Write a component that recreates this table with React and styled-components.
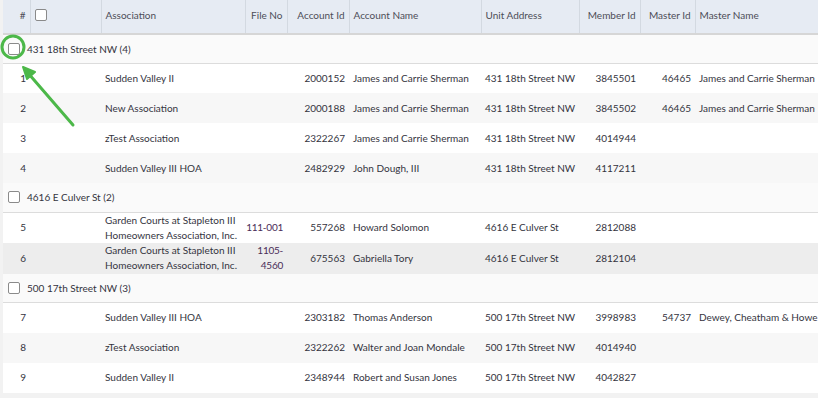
import React from "react";
import styled, { createGlobalStyle } from "styled-components";

const GlobalStyle = createGlobalStyle`
  html, body {
    margin: 0;
    padding: 0;
    background: #f2f2f2;
    overflow: hidden;
  }
  body {
    font-family: "Lato", "Open Sans", sans-serif;
    font-size: 10px;
    color: #34343e;
  }
`;

const Page = styled.div`
  position: relative;
  width: 818px;
  height: 398px;
  padding-left: 3px;
  box-sizing: border-box;
  overflow: hidden;
`;

const Grid = styled.table`
  border-collapse: collapse;
  table-layout: fixed;
  width: 900px;
`;

const HeadCell = styled.th`
  height: 34px;
  padding: 0 4px 4px;
  background: #e6ebf3;
  border-right: 1px solid #d3d9e1;
  border-bottom: 2px solid #d6d6d6;
  font-weight: normal;
  color: #4d4d57;
  text-align: ${({ $right }) => ($right ? "right" : "left")};
  white-space: nowrap;
  box-sizing: border-box;
`;

const GroupRow = styled.tr`
  background: #fafafa;
  td {
    height: 29px;
    padding: 0 0 0 5px;
    border-bottom: 1px solid #dcdcdc;
    box-sizing: border-box;
  }
`;

const GroupLabel = styled.div`
  display: flex;
  align-items: center;
  gap: 7px;
`;

const Row = styled.tr`
  background: ${({ $tone }) =>
    $tone === "hi" ? "#ededed" : $tone === "alt" ? "#f7f7f7" : "#ffffff"};
  td {
    height: ${({ $tone }) => ($tone === "hi" ? "31px" : "30px")};
  }
`;

const Cell = styled.td`
  padding: 0 4px;
  line-height: 15px;
  text-align: ${({ $right }) => ($right ? "right" : "left")};
  white-space: nowrap;
  overflow: hidden;
  box-sizing: border-box;
`;

const AssocCell = styled(Cell)`
  white-space: normal;
`;

const FileCell = styled(Cell)`
  padding: 0 4px 0 0;
  white-space: normal;
  letter-spacing: -0.25px;
  color: #4a2c58;
`;

const Box = styled.span`
  display: inline-block;
  width: 10px;
  height: 10px;
  border: 1px solid #8a8a8a;
  border-radius: 2px;
  background: #fff;
  vertical-align: middle;
`;

const Callout = styled.svg`
  position: absolute;
  left: 0;
  top: 0;
  pointer-events: none;
`;

const columns = [
  { key: "num", label: "#", width: 27, right: true },
  { key: "check", label: "", width: 71 },
  { key: "assoc", label: "Association", width: 144 },
  { key: "file", label: "File No", width: 42, right: true },
  { key: "acct", label: "Account Id", width: 62, right: true },
  { key: "name", label: "Account Name", width: 132 },
  { key: "addr", label: "Unit Address", width: 98 },
  { key: "member", label: "Member Id", width: 61, right: true },
  { key: "master", label: "Master Id", width: 55, right: true },
  { key: "mname", label: "Master Name", width: 208 },
];

const groups = [
  {
    title: "431 18th Street NW (4)",
    rows: [
      ["1", "Sudden Valley II", "", "2000152", "James and Carrie Sherman", "431 18th Street NW", "3845501", "46465", "James and Carrie Sherman"],
      ["2", "New Association", "", "2000188", "James and Carrie Sherman", "431 18th Street NW", "3845502", "46465", "James and Carrie Sherman"],
      ["3", "zTest Association", "", "2322267", "James and Carrie Sherman", "431 18th Street NW", "4014944", "", ""],
      ["4", "Sudden Valley III HOA", "", "2482929", "John Dough, III", "431 18th Street NW", "4117211", "", ""],
    ],
  },
  {
    title: "4616 E Culver St (2)",
    rows: [
      ["5", "Garden Courts at Stapleton III Homeowners Association, Inc.", "111-001", "557268", "Howard Solomon", "4616 E Culver St", "2812088", "", ""],
      ["6", "Garden Courts at Stapleton III Homeowners Association, Inc.", "1105-4560", "675563", "Gabriella Tory", "4616 E Culver St", "2812104", "", ""],
    ],
  },
  {
    title: "500 17th Street NW (3)",
    rows: [
      ["7", "Sudden Valley III HOA", "", "2303182", "Thomas Anderson", "500 17th Street NW", "3998983", "54737", "Dewey, Cheatham & Howe"],
      ["8", "zTest Association", "", "2322262", "Walter and Joan Mondale", "500 17th Street NW", "4014940", "", ""],
      ["9", "Sudden Valley II", "", "2348944", "Robert and Susan Jones", "500 17th Street NW", "4042827", "", ""],
    ],
  },
];

function DataRow({ cells, tone }) {
  const [num, assoc, file, acct, name, addr, member, master, mname] = cells;
  return (
    <Row $tone={tone}>
      <Cell $right>{num}</Cell>
      <Cell />
      <AssocCell>{assoc}</AssocCell>
      <FileCell $right>{file}</FileCell>
      <Cell $right>{acct}</Cell>
      <Cell>{name}</Cell>
      <Cell>{addr}</Cell>
      <Cell $right>{member}</Cell>
      <Cell $right>{master}</Cell>
      <Cell>{mname}</Cell>
    </Row>
  );
}

export default function App() {
  return (
    <>
      <GlobalStyle />
      <Page>
        <Grid>
          <colgroup>
            {columns.map((c) => (
              <col key={c.key} style={{ width: c.width }} />
            ))}
          </colgroup>
          <thead>
            <tr>
              {columns.map((c) => (
                <HeadCell key={c.key} $right={c.right}>
                  {c.key === "check" ? <Box /> : c.label}
                </HeadCell>
              ))}
            </tr>
          </thead>
          <tbody>
            {groups.map((g) => (
              <React.Fragment key={g.title}>
                <GroupRow>
                  <td colSpan={columns.length}>
                    <GroupLabel>
                      <Box />
                      <span>{g.title}</span>
                    </GroupLabel>
                  </td>
                </GroupRow>
                {g.rows.map((r, i) => (
                  <DataRow
                    key={r[0]}
                    cells={r}
                    tone={r[0] === "6" ? "hi" : i % 2 ? "alt" : "plain"}
                  />
                ))}
              </React.Fragment>
            ))}
          </tbody>
        </Grid>
        <Callout width="120" height="140" viewBox="0 0 120 140">
          <circle cx="13" cy="47" r="11" fill="none" stroke="#4cb849" strokeWidth="3" />
          <line x1="73" y1="125" x2="28" y2="73" stroke="#4cb849" strokeWidth="3" strokeLinecap="round" />
          <polygon points="23,67 35,72 27,79" fill="#4cb849" stroke="#4cb849" strokeWidth="2" strokeLinejoin="round" />
        </Callout>
      </Page>
    </>
  );
}
